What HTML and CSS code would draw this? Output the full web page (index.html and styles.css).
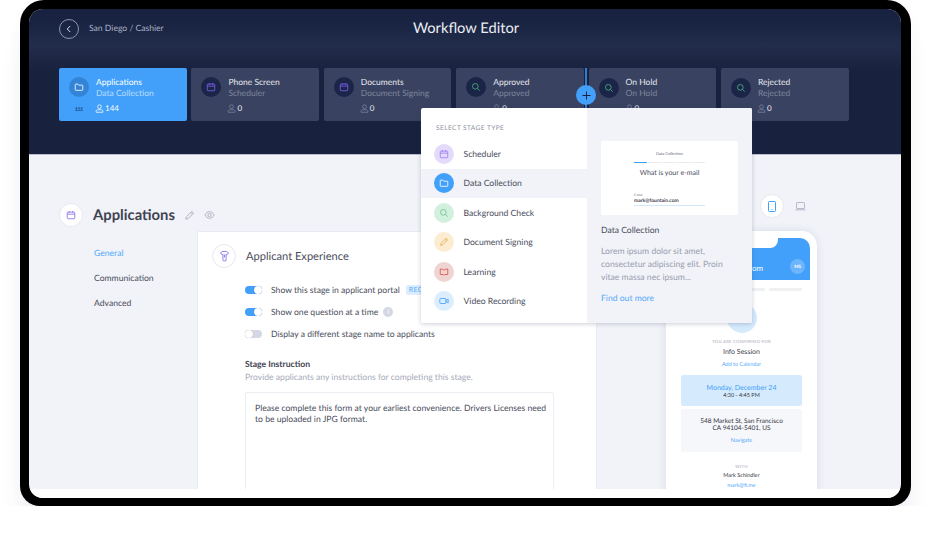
FILE: index.html
```html
<!DOCTYPE html>
<html lang="en">
<head>
    <meta charset="UTF-8">
    <title>Workflow Editor</title>
    <link rel="stylesheet" href="styles.css">
</head>
<body>
    <svg class="sprites" width="0" height="0">
        <symbol id="i-folder" viewBox="0 0 12 12"><path d="M1.5 3.2a.7.7 0 0 1 .7-.7h2.4l1 1.3h4.2a.7.7 0 0 1 .7.7v4.8a.7.7 0 0 1-.7.7H2.2a.7.7 0 0 1-.7-.7z"/></symbol>
        <symbol id="i-cal" viewBox="0 0 12 12"><rect x="1.5" y="2.5" width="9" height="8" rx="1"/><path d="M1.5 5h9M4 1.2v2M8 1.2v2"/></symbol>
        <symbol id="i-search" viewBox="0 0 12 12"><circle cx="5.2" cy="5.2" r="3.4"/><path d="M7.8 7.8l2.6 2.6"/></symbol>
        <symbol id="i-user" viewBox="0 0 12 12"><circle cx="6" cy="3.6" r="2.5"/><path d="M1.5 11V9.6c0-1.2 1-2 2.2-2h4.6c1.2 0 2.2.8 2.2 2V11z"/></symbol>
        <symbol id="i-pen" viewBox="0 0 12 12"><path d="M2 10l.5-2.4L8.6 1.5l1.9 1.9-6.1 6.1z"/><path d="M7.4 2.7l1.9 1.9"/></symbol>
        <symbol id="i-book" viewBox="0 0 12 12"><path d="M1.5 2.5c2 0 3.5.3 4.5 1.2 1-.9 2.5-1.2 4.5-1.2V9H7l-1 1-1-1H1.5z"/></symbol>
        <symbol id="i-video" viewBox="0 0 12 12"><rect x="1" y="3" width="7.2" height="6" rx="1"/><path d="M8.2 5.5L11 3.8v4.4L8.2 6.5"/></symbol>
    </svg>

    <div class="device">
        <div class="screen">
            <header class="topbar">
                <div class="topbar-row">
                    <div class="crumbs">
                        <span class="back">
                            <svg width="8" height="8" viewBox="0 0 8 8"><path d="M5.2 1L2.2 4l3 3"/></svg>
                        </span>
                        <span class="crumb-text">San Diego / Cashier</span>
                    </div>
                    <h1 class="page-title">Workflow Editor</h1>
                </div>

                <div class="stages">
                    <div class="stage stage-active">
                        <span class="stage-icon"><svg class="ico"><use href="#i-folder"/></svg></span>
                        <div class="stage-text">
                            <div class="stage-name">Applications</div>
                            <div class="stage-sub">Data Collection</div>
                            <div class="stage-count"><svg class="ico-user"><use href="#i-user"/></svg>144</div>
                        </div>
                        <span class="grip"></span>
                    </div>
                    <div class="stage">
                        <span class="stage-icon violet"><svg class="ico"><use href="#i-cal"/></svg></span>
                        <div class="stage-text">
                            <div class="stage-name">Phone Screen</div>
                            <div class="stage-sub">Scheduler</div>
                            <div class="stage-count"><svg class="ico-user"><use href="#i-user"/></svg>0</div>
                        </div>
                    </div>
                    <div class="stage">
                        <span class="stage-icon violet"><svg class="ico"><use href="#i-cal"/></svg></span>
                        <div class="stage-text">
                            <div class="stage-name">Documents</div>
                            <div class="stage-sub">Document Signing</div>
                            <div class="stage-count"><svg class="ico-user"><use href="#i-user"/></svg>0</div>
                        </div>
                    </div>
                    <div class="stage">
                        <span class="stage-icon green"><svg class="ico"><use href="#i-search"/></svg></span>
                        <div class="stage-text">
                            <div class="stage-name">Approved</div>
                            <div class="stage-sub">Approved</div>
                            <div class="stage-count"><svg class="ico-user"><use href="#i-user"/></svg>0</div>
                        </div>
                    </div>
                    <div class="stage">
                        <span class="stage-icon green low"><svg class="ico"><use href="#i-search"/></svg></span>
                        <div class="stage-text">
                            <div class="stage-name">On Hold</div>
                            <div class="stage-sub">On Hold</div>
                            <div class="stage-count"><svg class="ico-user"><use href="#i-user"/></svg>0</div>
                        </div>
                    </div>
                    <div class="stage">
                        <span class="stage-icon green low"><svg class="ico"><use href="#i-search"/></svg></span>
                        <div class="stage-text">
                            <div class="stage-name">Rejected</div>
                            <div class="stage-sub">Rejected</div>
                            <div class="stage-count"><svg class="ico-user"><use href="#i-user"/></svg>0</div>
                        </div>
                    </div>
                </div>
            </header>

            <main class="workspace">
                <section class="editor">
                    <div class="editor-head">
                        <span class="round-icon violet-line"><svg class="ico"><use href="#i-cal"/></svg></span>
                        <h2 class="editor-title">Applications</h2>
                        <svg class="head-tool" width="11" height="11"><use href="#i-pen"/></svg>
                        <svg class="head-tool" width="11" height="8" viewBox="0 0 12 9"><path d="M.8 4.5C2.2 2 4 .8 6 .8s3.8 1.2 5.2 3.7C9.8 7 8 8.2 6 8.2S2.2 7 .8 4.5z"/><circle cx="6" cy="4.5" r="1.8"/></svg>
                    </div>
                    <div class="editor-body">
                        <nav class="side-nav">
                            <a class="side-link side-link-on">General</a>
                            <a class="side-link">Communication</a>
                            <a class="side-link">Advanced</a>
                        </nav>
                        <div class="panel">
                            <div class="panel-head">
                                <span class="round-icon violet-line">
                                    <svg width="11" height="12" viewBox="0 0 12 13" class="ico-line"><path d="M3.5 1.5h5l2 2L8.5 5l-.8-.6V11a.8.8 0 0 1-.8.8H5.1a.8.8 0 0 1-.8-.8V4.4L3.5 5l-2-1.5z"/><path d="M6 5v3"/></svg>
                                </span>
                                <h3 class="panel-title">Applicant Experience</h3>
                            </div>
                            <ul class="options">
                                <li class="option"><span class="switch switch-on"></span>Show this stage in applicant portal<span class="tag">RECOMMENDED</span></li>
                                <li class="option"><span class="switch switch-on"></span>Show one question at a time<span class="info">i</span></li>
                                <li class="option"><span class="switch"></span>Display a different stage name to applicants</li>
                            </ul>
                            <div class="field-label">Stage Instruction</div>
                            <div class="field-hint">Provide applicants any instructions for completing this stage.</div>
                            <div class="textarea">Please complete this form at your earliest convenience. Drivers Licenses need to be uploaded in JPG format.</div>
                        </div>
                    </div>
                </section>

                <aside class="preview">
                    <div class="view-switch">
                        <span class="round-icon">
                            <svg width="8" height="11" viewBox="0 0 8 11" class="ico-blue"><rect x=".5" y=".5" width="7" height="10" rx=".8"/><path d="M3.5 8.5h1"/></svg>
                        </span>
                        <svg width="11" height="9" viewBox="0 0 11 9" class="ico-gray"><rect x="1.5" y=".5" width="8" height="6" rx=".6"/><path d="M.5 7.8h10"/></svg>
                    </div>
                    <div class="phone">
                        <div class="phone-top">
                            <span class="phone-notch"></span>
                            <span class="phone-mail">om</span>
                            <span class="phone-avatar">MS</span>
                        </div>
                        <div class="phone-steps"><span></span><span></span></div>
                        <span class="phone-badge"></span>
                        <div class="phone-caps">YOU ARE CONFIRMED FOR</div>
                        <div class="phone-event">Info Session</div>
                        <div class="phone-link">Add to Calendar</div>
                        <div class="phone-date">
                            <div class="date-main">Monday, December 24</div>
                            <div class="phone-small">4:30 - 4:45 PM</div>
                        </div>
                        <div class="phone-place">
                            <div class="phone-small phone-addr">548 Market St, San Francisco</div>
                            <div class="phone-small phone-addr">CA 94104-5401, US</div>
                            <div class="phone-link phone-nav">Navigate</div>
                        </div>
                        <div class="phone-caps phone-with">WITH</div>
                        <div class="phone-small phone-host">Mark Schindler</div>
                        <div class="phone-link phone-mailto">mark@fi.me</div>
                    </div>
                </aside>
            </main>
            <div class="screen-foot"></div>

            <!-- add stage button + menu sit over the page -->
            <span class="add-line"></span>
            <span class="add-btn">
                <svg width="9" height="9" viewBox="0 0 9 9"><path d="M4.5 .5v8M.5 4.5h8"/></svg>
            </span>
            <div class="stage-menu">
                <div class="menu-list">
                    <div class="menu-title">SELECT STAGE TYPE</div>
                    <div class="menu-row"><span class="menu-icon m-violet"><svg class="ico"><use href="#i-cal"/></svg></span>Scheduler</div>
                    <div class="menu-row menu-row-on"><span class="menu-icon m-blue"><svg class="ico"><use href="#i-folder"/></svg></span>Data Collection</div>
                    <div class="menu-row"><span class="menu-icon m-green"><svg class="ico"><use href="#i-search"/></svg></span>Background Check</div>
                    <div class="menu-row"><span class="menu-icon m-orange"><svg class="ico"><use href="#i-pen"/></svg></span>Document Signing</div>
                    <div class="menu-row"><span class="menu-icon m-red"><svg class="ico"><use href="#i-book"/></svg></span>Learning</div>
                    <div class="menu-row"><span class="menu-icon m-sky"><svg class="ico"><use href="#i-video"/></svg></span>Video Recording</div>
                </div>
                <div class="menu-detail">
                    <div class="mini">
                        <div class="mini-title">Data Collection</div>
                        <div class="mini-bars"><span class="mini-bar-on"></span><span></span><span></span><span></span><span></span></div>
                        <div class="mini-q">What is your e-mail</div>
                        <div class="mini-label">E-Mail</div>
                        <div class="mini-value">mark@fountain.com</div>
                    </div>
                    <div class="detail-title">Data Collection</div>
                    <p class="detail-copy">Lorem ipsum dolor sit amet, consectetur adipiscing elit. Proin vitae massa nec ipsum...</p>
                    <a class="detail-link">Find out more</a>
                </div>
            </div>
        </div>
    </div>
</body>
</html>
```

FILE: styles.css
```css
* {
    box-sizing: border-box;
}

body {
    margin: 0;
    background: #fff;
    font-family: "Lato", "Liberation Sans", sans-serif;
    color: #4a4d5c;
    overflow: hidden;
    text-rendering: geometricPrecision;
}

h1, h2, h3, p, ul {
    margin: 0;
    padding: 0;
    font-weight: 400;
}

.sprites {
    position: absolute;
}

.device {
    width: 891px;
    height: 506px;
    margin-left: 20px;
    padding: 9px 10px 8px 9px;
    background: #000;
    border-radius: 24px 24px 20px 20px;
    box-shadow: 0 30px 26px -4px rgba(60, 80, 140, .08), 0 6px 14px rgba(60, 80, 140, .03);
}

.screen {
    position: relative;
    height: 100%;
    display: flex;
    flex-direction: column;
    overflow: hidden;
    border-radius: 14px;
    background: #f1f3f8;
}

/* header */
.topbar {
    height: 146px;
    flex: none;
    padding: 10px 30px 0;
    background: linear-gradient(#17213f 0, #1a2543 18px, #222c4b 36px, #1f2946 46px, #18223f 62px);
    border-bottom: 1px solid #b9bdd0;
}

.topbar-row {
    position: relative;
    height: 20px;
    display: flex;
    align-items: center;
    justify-content: center;
}

.crumbs {
    position: absolute;
    left: 0;
    top: 0;
    display: flex;
    align-items: center;
    gap: 10px;
    font-size: 8.6px;
    color: #aab0c4;
}

.crumb-text {
    margin-bottom: 2px;
}

.back {
    width: 20px;
    height: 20px;
    display: flex;
    align-items: center;
    justify-content: center;
    border: 1px solid #8f96ad;
    border-radius: 50%;
}

.back path {
    fill: none;
    stroke: #d7dbe6;
    stroke-width: 1;
}

.page-title {
    margin-left: 2px;
    font-size: 14.7px;
    color: #eceef4;
    transform: translateY(-1px);
}

.stages {
    display: flex;
    gap: 4.8px;
    margin-top: 29px;
}

.stage {
    position: relative;
    width: 127.6px;
    height: 53px;
    display: flex;
    padding: 9px 10px;
    gap: 7px;
    background: #394260;
    border-radius: 2px;
}

.stage-active {
    background: #42a0fa;
}

.stage-icon {
    width: 20px;
    height: 20px;
    flex: none;
    display: flex;
    align-items: center;
    justify-content: center;
    border-radius: 50%;
    background: #1b2547;
    color: #fff;
}

.stage-icon.low {
    margin-top: 1px;
}

.stage-active .stage-icon {
    background: #3384d6;
}

.violet {
    color: #7c5ff0;
}

.green {
    color: #49b27c;
}

.ico {
    width: 10px;
    height: 10px;
    fill: none;
    stroke: currentColor;
    stroke-width: 1;
}

.stage-text {
    font-size: 8.5px;
    line-height: 11px;
    white-space: nowrap;
}

.stage-name {
    color: #e6e8ef;
}

.stage-sub {
    color: #7f869f;
}

.stage-active .stage-name,
.stage-active .stage-count {
    color: #fff;
}

.stage-active .stage-sub {
    color: #bcdcfb;
}

.stage-count {
    display: flex;
    align-items: center;
    gap: 1px;
    margin: 4px 0 0 -1px;
    color: #e6e8ef;
    font-size: 8px;
}

.ico-user {
    width: 9px;
    height: 9px;
    fill: none;
    stroke: #7f869f;
    stroke-width: 1;
}

.stage-active .ico-user {
    stroke: #fff;
}

.grip {
    position: absolute;
    left: 16px;
    top: 39px;
    width: 8px;
    height: 4px;
    background-image: radial-gradient(circle, #1f5fa6 .9px, transparent 1px);
    background-size: 2.7px 2.2px;
}

/* page under the header */
.workspace {
    flex: 1;
    min-height: 0;
    display: flex;
    overflow: hidden;
    padding: 48px 0 0 30px;
}

.editor {
    width: 538px;
    flex: none;
}

.editor-head {
    height: 24px;
    display: flex;
    align-items: center;
}

.round-icon {
    width: 24px;
    height: 24px;
    flex: none;
    display: flex;
    align-items: center;
    justify-content: center;
    background: #fff;
    border: 1px solid #e6e7f2;
    border-radius: 50%;
}

.violet-line {
    color: #8a6ef2;
}

.editor-title {
    margin: 0 9px 0 10px;
    font-size: 14.8px;
    font-weight: 700;
    color: #3f4250;
}

.head-tool {
    fill: none;
    stroke: #a9adbd;
    stroke-width: 1;
    margin-right: 9px;
}

.editor-body {
    display: flex;
    margin-top: 4px;
}

.side-nav {
    width: 138px;
    flex: none;
    display: flex;
    flex-direction: column;
    gap: 13px;
    padding: 16px 0 0 35px;
    font-size: 8.6px;
    line-height: 12px;
}

.side-link-on {
    color: #55a9fb;
}

.panel {
    width: 400px;
    height: 320px;
    padding: 12px 42px 0 14px;
    background: #fff;
    border: 1px solid #e9ebf3;
    border-radius: 2px 2px 0 0;
}

.panel-head {
    display: flex;
    align-items: center;
    gap: 10px;
}

.ico-line {
    fill: none;
    stroke: #8a6ef2;
    stroke-width: 1;
}

.panel-title {
    font-size: 11.1px;
    color: #4a4d5c;
}

.options {
    list-style: none;
    margin: 11px 0 0 33px;
    width: 400px;
}

.option {
    height: 22px;
    display: flex;
    align-items: center;
    font-size: 8.6px;
    white-space: nowrap;
}

.switch {
    position: relative;
    width: 17px;
    height: 8px;
    margin-right: 9px;
    border-radius: 4px;
    background: #d5d8e4;
}

.switch::after {
    content: "";
    position: absolute;
    left: 0;
    top: 0;
    width: 8px;
    height: 8px;
    border-radius: 50%;
    background: #fff;
    box-shadow: 0 0 1px rgba(0, 0, 0, .3);
}

.switch-on {
    background: #42a0fa;
}

.switch-on::after {
    left: 9px;
}

.tag {
    margin-left: 6px;
    padding: 1px 3px;
    font-size: 7px;
    letter-spacing: .4px;
    color: #5baafa;
    background: #dceefe;
    border-radius: 2px;
}

.info {
    width: 10px;
    height: 10px;
    margin-left: 5px;
    border-radius: 50%;
    background: #d5d8e4;
    color: #fff;
    font-size: 7px;
    line-height: 10px;
    text-align: center;
}

.field-label {
    margin: 13px 0 0 33px;
    font-size: 8.6px;
    line-height: 12px;
    font-weight: 700;
    color: #3f4250;
}

.field-hint {
    margin: 1px 0 0 33px;
    font-size: 8.6px;
    line-height: 12px;
    color: #a7aaba;
    white-space: nowrap;
}

.textarea {
    width: 309px;
    height: 160px;
    margin: 9px 0 0 33px;
    padding: 10px 4px 0 9px;
    font-size: 8.6px;
    line-height: 10.5px;
    color: #4a4d5c;
    border: 1px solid #eceef4;
    border-radius: 2px;
}

/* phone preview */
.preview {
    width: 221px;
    flex: none;
}

.view-switch {
    height: 24px;
    display: flex;
    align-items: center;
    gap: 11px;
    margin-top: -9px;
    padding-left: 163px;
}

.ico-blue {
    fill: none;
    stroke: #42a0fa;
    stroke-width: 1;
}

.ico-gray {
    fill: none;
    stroke: #b6bac9;
    stroke-width: 1;
}

.phone {
    width: 151px;
    height: 300px;
    margin: 13px 0 0 69px;
    padding-top: 7px;
    background: #fff;
    border-radius: 15px 15px 0 0;
    box-shadow: 0 0 8px rgba(80, 95, 150, .14);
    text-align: center;
    font-size: 5.5px;
    color: #3f4250;
}

.phone-top {
    position: relative;
    height: 42px;
    margin: 0 7px;
    background: #42a0fa;
    border-radius: 10px 10px 0 0;
    overflow: hidden;
}

.phone-notch {
    position: absolute;
    left: 0;
    top: 0;
    width: 105px;
    height: 10px;
    background: #fff;
    border-bottom-right-radius: 8px;
}

.phone-mail {
    position: absolute;
    left: 79px;
    top: 25px;
    font-size: 8px;
    color: #fff;
}

.phone-avatar {
    position: absolute;
    right: 5px;
    top: 21px;
    width: 15px;
    height: 15px;
    border-radius: 50%;
    background: #6db5fb;
    color: #fff;
    font-size: 4.5px;
    font-weight: 700;
    line-height: 15px;
}

.phone-steps {
    display: flex;
    justify-content: flex-end;
    gap: 4px;
    margin: 8px 15px 0 0;
}

.phone-steps span {
    width: 33px;
    height: 3px;
    background: #eef0f2;
    border-radius: 1px;
}

.phone-badge {
    display: block;
    width: 30px;
    height: 30px;
    margin: 12px auto 0;
    border-radius: 50%;
    background: #d5ebfd;
}

.phone-caps {
    margin-top: 6px;
    font-size: 4.3px;
    line-height: 6px;
    letter-spacing: .2px;
    color: #a7aaba;
}

.phone-event {
    margin-top: 3px;
    font-size: 7px;
    line-height: 9px;
}

.phone-link {
    margin-top: 5px;
    font-size: 5.5px;
    line-height: 7px;
    color: #55a9fb;
}

.phone-date {
    height: 31px;
    margin: 6px 15px 0;
    padding-top: 8.5px;
    background: #d5ebfd;
    border-radius: 2px;
}

.date-main {
    font-size: 7px;
    line-height: 9px;
    color: #42a0fa;
}

.phone-small {
    font-size: 5.5px;
    line-height: 6.5px;
    color: #33353f;
}

.phone-addr {
    font-size: 6.5px;
}

.phone-place {
    height: 43px;
    margin: 3px 15px 0;
    padding-top: 10px;
    background: #f6f7fa;
    border-radius: 2px;
}

.phone-nav {
    margin-top: 6px;
}

.phone-with {
    margin-top: 12px;
}

.phone-host {
    margin-top: 3px;
}

.phone-mailto {
    margin-top: 3px;
}

.screen-foot {
    height: 9px;
    flex: none;
    background: #fff;
}

/* add stage */
.add-line {
    position: absolute;
    left: 556px;
    top: 59px;
    width: 2px;
    height: 40px;
    background: #2f7fd6;
}

.add-btn {
    position: absolute;
    left: 547px;
    top: 76px;
    width: 20px;
    height: 20px;
    display: flex;
    align-items: center;
    justify-content: center;
    border-radius: 50%;
    background: #42a0fa;
}

.add-btn path {
    stroke: #18223f;
    stroke-width: 1;
}

.stage-menu {
    position: absolute;
    left: 392px;
    top: 99px;
    width: 331px;
    height: 215px;
    display: flex;
    background: #fff;
    border-radius: 2px;
    box-shadow: 0 1px 4px rgba(50, 60, 100, .25);
}

.menu-list {
    width: 166px;
    flex: none;
    padding-top: 16px;
}

.menu-title {
    padding-left: 15px;
    margin-bottom: 6.3px;
    font-size: 6.6px;
    line-height: 9px;
    letter-spacing: .4px;
    color: #8e91a3;
}

.menu-row {
    height: 29.4px;
    display: flex;
    align-items: center;
    gap: 9.5px;
    padding-left: 13px;
    font-size: 8.6px;
}

.menu-row-on {
    background: #f1f3f8;
}

.menu-icon {
    width: 20px;
    height: 20px;
    display: flex;
    align-items: center;
    justify-content: center;
    border-radius: 50%;
}

.m-violet {
    background: #e4dbfb;
    color: #9a7cf5;
}

.m-blue {
    background: #42a0fa;
    color: #fff;
}

.m-green {
    background: #d2f0de;
    color: #6cc08f;
}

.m-orange {
    background: #fbecd2;
    color: #e9a94f;
}

.m-red {
    background: #efd4d2;
    color: #d9504c;
}

.m-sky {
    background: #dceefe;
    color: #42a0fa;
}

.menu-detail {
    flex: 1;
    padding: 33px 14px 0;
    background: #f1f3f8;
    border-radius: 0 2px 2px 0;
}

.mini {
    height: 74px;
    padding: 10px 33px 0;
    background: #fff;
    border-radius: 2px;
    text-align: center;
}

.mini-title {
    font-size: 4px;
    line-height: 5px;
    color: #6d7080;
}

.mini-bars {
    display: flex;
    gap: 1px;
    margin-top: 5.5px;
}

.mini-bars span {
    flex: 1;
    height: 1.5px;
    background: #e9ebef;
}

.mini-bars .mini-bar-on {
    background: #42a0fa;
}

.mini-q {
    margin-top: 5px;
    font-size: 7px;
    line-height: 11px;
    white-space: nowrap;
}

.mini-label {
    margin-top: 14px;
    font-size: 3px;
    line-height: 4px;
    text-align: left;
    color: #6d7080;
}

.mini-value {
    margin-top: 1px;
    padding-bottom: 1px;
    font-size: 5px;
    font-weight: 700;
    line-height: 6px;
    text-align: left;
    color: #3f4250;
    border-bottom: 1.5px solid #cfe8fd;
}

.detail-title {
    margin-top: 9px;
    font-size: 8.6px;
    line-height: 12px;
}

.detail-copy {
    margin-top: 9px;
    font-size: 8.6px;
    line-height: 13px;
    color: #9a9dae;
}

.detail-link {
    display: block;
    margin-top: 8px;
    font-size: 8.6px;
    line-height: 12px;
    color: #55a9fb;
}
```
